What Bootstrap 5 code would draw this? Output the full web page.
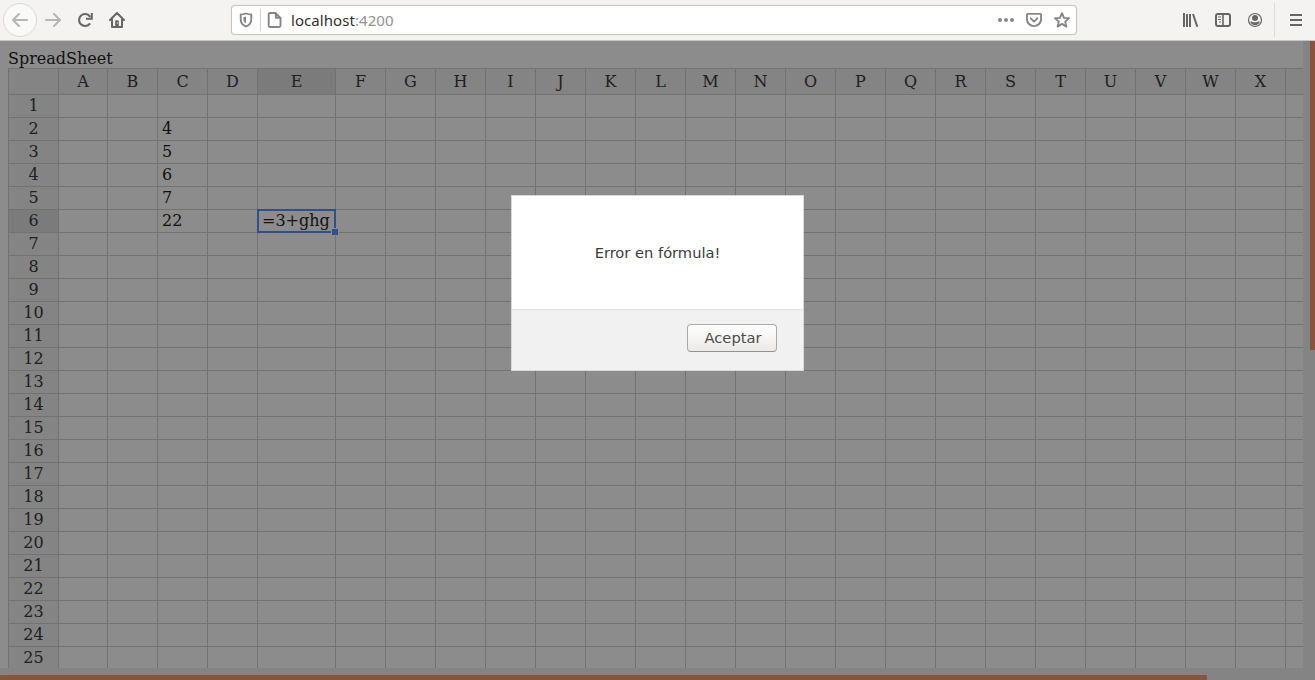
<!DOCTYPE html>
<html lang="es">
<head>
<meta charset="utf-8">
<title>SpreadSheet</title>
<link rel="stylesheet" href="https://cdn.jsdelivr.net/npm/bootstrap@5.3.0/dist/css/bootstrap.min.css">
<style>
  body { height: 680px; background: #8c8c8c; font-family: "DejaVu Serif", serif; font-size: 16px; line-height: 19px; color: #111; }
  svg { display: block; flex: none; }
  .toolbar { height: 41px; background: #f4f3f2; border-bottom: 1px solid #c9c6c2; color: #666664; flex: none; }
  .tool-group { height: 40px; }
  .back-btn { width: 34px; height: 34px; border: 1px solid #d9d8d5; background: #f9f9f8; margin-left: 3px; }
  .nav-left { width: 231px; }
  .url-bar { width: 846px; height: 30px; background: #fff; border: 1px solid #c6c4c1; border-radius: 4px; box-shadow: 0 0 1px #ccc; color: #868686; }
  .url-sep { width: 1px; height: 22px; background: #cfcfcf; margin: 0 6px 0 6px; }
  .url-text { font: 15px/20px "Noto Sans", sans-serif; color: #303030; margin-left: 8px; letter-spacing: .06px; }
  .url-text span { color: #929292; }
  .tool-sep { width: 1px; height: 34px; background: #dcdbd9; }
  .page { height: 639px; background: #848484; }
  .viewport { width: 1303px; height: 627px; background: #8c8c8c; padding: 8px 0 0 8px; }
  .sheet { border-collapse: separate; border-spacing: 0; table-layout: fixed; width: 1327px; }
  .sheet th, .sheet td { border: solid #727272; border-width: 1px 0 0 1px; height: 23px; padding: 0 4px; white-space: nowrap; line-height: 22px; vertical-align: top; }
  .sheet th { background: #848484; color: #202020; font-weight: 400; text-align: center; padding: 0; }
  .sheet thead th { height: 26px; line-height: 25px; }
  .sheet th.sel { background: #7b7b7b; }
  .sel-cell { position: relative; }
  .sel-cell::before { content: ""; position: absolute; inset: -1px -1px -1px -1px; border: 2px solid #2f4f8f; }
  .sel-cell::after { content: ""; position: absolute; right: -4px; bottom: -4px; width: 8px; height: 8px; background: #2f4f8f; border: 1px solid #8c8c8c; box-sizing: border-box; }
  .thumb-y { right: 0; top: 0; width: 5px; height: 309px; background: #88543f; }
  .thumb-x { left: 0; bottom: 0; width: 1207px; height: 5px; background: #88543f; border-radius: 1px 1px 0 0; }
  .dialog-box { left: 511px; top: 154px; width: 293px; height: 176px; border: 1px solid #d9d9d9; background: #fff; font: 14.67px/18px "DejaVu Sans", sans-serif; color: #3c3c3c; }
  .dialog-foot { height: 61px; background: #f1f1f1; border-top: 1px solid #e2e2e2; padding: 14px 26px 0 0; }
  .accept { width: 90px; height: 28px; border: 1px solid #a9a9a9; border-bottom-color: #939393; border-radius: 4px; background: linear-gradient(#fefefe, #eceae8); color: #4c4c4c; font: inherit; padding: 0 0 0 2px; }
</style>
<script src="https://cdn.jsdelivr.net/npm/bootstrap@5.3.0/dist/js/bootstrap.bundle.min.js"></script>
</head>
<body class="overflow-hidden">
<header class="toolbar d-flex align-items-center">
  <div class="nav-left d-flex align-items-center flex-shrink-0">
    <div class="back-btn rounded-circle d-flex align-items-center justify-content-center">
      <svg width="16" height="16" viewBox="0 0 16 16" fill="none" stroke="#b6b6b4" stroke-width="2" stroke-linecap="round" stroke-linejoin="round"><path d="M7 2 1 8l6 6M1 8h14"/></svg>
    </div>
    <svg class="ms-2" width="16" height="16" viewBox="0 0 16 16" fill="none" stroke="#b6b6b4" stroke-width="2" stroke-linecap="round" stroke-linejoin="round"><path d="m9 2 6 6-6 6M1 8h14"/></svg>
    <svg class="ms-3" width="16" height="16" viewBox="0 0 16 16" fill="none" stroke="currentColor" stroke-width="2.1"><path d="M12.8 4.300A6 6 0 1 0 12.600 12" stroke-linecap="round"/><path d="M14.800 1v5.800H9" stroke-width="2"/></svg>
    <svg class="ms-3" width="16" height="16" viewBox="0 0 16 16" fill="none" stroke="currentColor" stroke-width="2" stroke-linecap="round" stroke-linejoin="round"><path d="m1 8 7-7 7 7M3 7.500V15h10V7.500"/><path d="M6.200 14V9.200a1 1 0 0 1 1-1h1.600a1 1 0 0 1 1 1V14z" fill="currentColor" stroke="none"/><path d="M8.500 10.800v.6" stroke="#eee" stroke-width=".8"/></svg>
  </div>
  <div class="url-bar d-flex align-items-center flex-shrink-0">
    <svg style="margin-left:6px" width="16" height="16" viewBox="0 0 16 16"><path d="M8 1.500c-2 .9-3.700 1-5.300 1v4.700c0 3.600 1.900 6 5.300 7.200 3.400-1.200 5.300-3.600 5.300-7.200V2.500c-1.600 0-3.300-.1-5.300-1z" fill="none" stroke="currentColor" stroke-width="1.900" stroke-linejoin="round"/><path d="M8 4.500c-1 .4-1.800.6-2.600.6v2.200c0 2 .9 3.300 2.600 4.200z" fill="currentColor"/></svg>
    <div class="url-sep"></div>
    <svg width="16" height="16" viewBox="0 0 16 16" fill="none" stroke="currentColor" stroke-width="1.900" stroke-linejoin="round"><path d="M3.200 1h5.300l5 5v7.500a1.500 1.500 0 0 1-1.500 1.500H3.200a1.500 1.500 0 0 1-1.500-1.500v-11A1.500 1.500 0 0 1 3.200 1zM8.800 1v4.700h4.600"/></svg>
    <div class="url-text">localhost<span>:4200</span></div>
    <div class="d-flex gap-2 ms-auto" style="margin-right:6px">
      <svg width="16" height="16" viewBox="0 0 16 16" fill="currentColor"><circle cx="2" cy="8" r="2"/><circle cx="8" cy="8" r="2"/><circle cx="14" cy="8" r="2"/></svg>
      <svg class="mx-1" width="16" height="16" viewBox="0 0 16 16" fill="none" stroke="currentColor" stroke-linecap="round" stroke-linejoin="round"><path d="M2 1.900h12a1.100 1.100 0 0 1 1.100 1.100v4a7.100 7.100 0 0 1-14.200 0V3A1.100 1.100 0 0 1 2 1.900z" stroke-width="1.900"/><path d="M4.700 6.400 8 9.600l3.300-3.200" stroke-width="2"/></svg>
      <svg width="16" height="16" viewBox="0 0 16 16" fill="none" stroke="currentColor" stroke-width="1.900" stroke-linejoin="round"><path d="m8 1.200 2 4.700 5 .4-3.800 3.300 1.200 5L8 11.900l-4.400 2.700 1.200-5L1 6.300l5-.4z"/></svg>
    </div>
  </div>
  <div class="tool-group d-flex align-items-center ms-auto" style="padding-right:11px">
    <svg width="16" height="16" viewBox="0 0 16 16" stroke="currentColor" stroke-width="2" fill="none"><path d="M1 1v14M4 2v13M7 2v13"/><path d="m10 2 4.300 12.700"/></svg>
    <svg class="ms-3" width="16" height="16" viewBox="0 0 16 16" fill="none" stroke="currentColor" stroke-width="2"><rect x="1" y="2" width="14" height="12" rx="2"/><path d="M8 2v12" stroke-width="1.600"/><path d="M3 5h3M3 7.500h3M4 10h2" stroke-width="1"/></svg>
    <svg class="ms-3" width="16" height="16" viewBox="0 0 16 16"><circle cx="8" cy="8" r="6.500" fill="none" stroke="currentColor" stroke-width="1.200"/><circle cx="8" cy="6" r="3" fill="currentColor"/><path d="M3.200 9.800c1.200-.8 2.300.5 4.800.5s3.600-1.300 4.800-.5A5.300 5.300 0 0 1 8 13.300a5.300 5.300 0 0 1-4.800-3.500z" fill="currentColor"/></svg>
    <div class="tool-sep" style="margin:0 13px 0 11px"></div>
    <svg width="16" height="16" viewBox="0 0 16 16" stroke="currentColor" stroke-width="2"><path d="M2 3h12M2 8h12M2 13h12"/></svg>
  </div>
</header>
<main class="page position-relative overflow-hidden">
  <div class="viewport overflow-hidden">
    <div>SpreadSheet</div>
    <table class="sheet">
      <colgroup id="cols"></colgroup>
      <thead><tr id="head"></tr></thead>
      <tbody id="rows"></tbody>
    </table>
  </div>
  <div class="thumb-y position-absolute"></div>
  <div class="thumb-x position-absolute"></div>
  <div class="dialog-box position-absolute d-flex flex-column" role="dialog">
    <div class="flex-grow-1 d-flex align-items-center justify-content-center">Error en fórmula!</div>
    <div class="dialog-foot d-flex align-items-start justify-content-end"><button class="accept">Aceptar</button></div>
  </div>
</main>
<script>
  const letters = [...'ABCDEFGHIJKLMNOPQRSTUVWX', ''];
  const values = { C2: '4', C3: '5', C4: '6', C5: '7', C6: '22', E6: '=3+ghg' };
  const width = l => l === 'A' ? 49 : l === 'E' ? 78 : 50;
  document.getElementById('cols').innerHTML = '<col style="width:50px">' + letters.map(l => `<col style="width:${width(l)}px">`).join('');
  document.getElementById('head').innerHTML = '<th></th>' + letters.map(l => `<th class="${l === 'E' ? 'sel' : ''}">${l}</th>`).join('');
  document.getElementById('rows').innerHTML = Array.from({ length: 25 }, (_, i) => i + 1).map(r =>
    `<tr><th class="${r === 6 ? 'sel' : ''}">${r}</th>` + letters.map(l =>
      `<td${l + r === 'E6' ? ' class="sel-cell"' : ''}>${values[l + r] || ''}</td>`).join('') + '</tr>').join('');
</script>
</body>
</html>
